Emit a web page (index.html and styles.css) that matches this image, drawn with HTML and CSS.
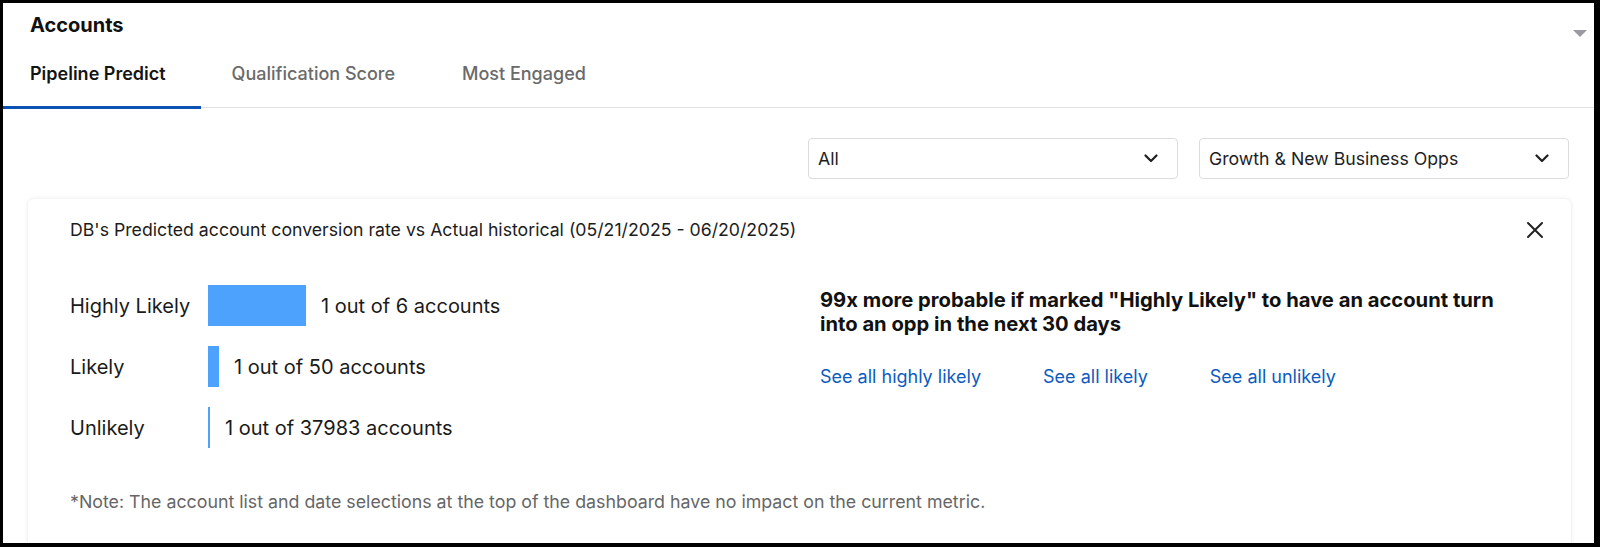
FILE: index.html
```html
<!DOCTYPE html>
<html lang="en">
<head>
<meta charset="utf-8">
<title>Accounts</title>
<link rel="stylesheet" href="styles.css">
</head>
<body>
<div class="frame">
  <header class="panel-head">
    <div class="title-row">
      <h1 class="title">Accounts</h1>
      <span class="collapse-caret"></span>
    </div>
    <nav class="tabs">
      <a class="tab active">Pipeline Predict</a>
      <a class="tab">Qualification Score</a>
      <a class="tab">Most Engaged</a>
    </nav>
  </header>

  <section class="content">
    <div class="filters">
      <div class="select">
        <span>All</span>
        <svg class="chev" width="14" height="9" viewBox="0 0 14 9"><path d="M1.5 1.5 L7 7 L12.5 1.5" fill="none" stroke="#1f1f1f" stroke-width="2.2" stroke-linecap="round" stroke-linejoin="round"/></svg>
      </div>
      <div class="select">
        <span>Growth &amp; New Business Opps</span>
        <svg class="chev" width="14" height="9" viewBox="0 0 14 9"><path d="M1.5 1.5 L7 7 L12.5 1.5" fill="none" stroke="#1f1f1f" stroke-width="2.2" stroke-linecap="round" stroke-linejoin="round"/></svg>
      </div>
    </div>

    <div class="card">
      <div class="card-head">
        <h2 class="card-title">DB's Predicted account conversion rate vs Actual historical (05/21/2025 - 06/20/2025)</h2>
        <svg class="close" width="18" height="18" viewBox="0 0 18 18"><path d="M2 2 L16 16 M16 2 L2 16" stroke="#222" stroke-width="2" stroke-linecap="round"/></svg>
      </div>
      <div class="card-body">
        <div class="rates">
          <div class="rate-row">
            <span class="rate-label">Highly Likely</span>
            <span class="bar" style="width:98px"></span>
            <span class="rate-text">1 out of 6 accounts</span>
          </div>
          <div class="rate-row">
            <span class="rate-label">Likely</span>
            <span class="bar" style="width:11px"></span>
            <span class="rate-text">1 out of 50 accounts</span>
          </div>
          <div class="rate-row">
            <span class="rate-label">Unlikely</span>
            <span class="bar" style="width:2px"></span>
            <span class="rate-text">1 out of 37983 accounts</span>
          </div>
        </div>
        <div class="insight">
          <p class="headline">99x more probable if marked "Highly Likely" to have an account turn into an opp in the next 30 days</p>
          <div class="links">
            <a class="link">See all highly likely</a>
            <a class="link">See all likely</a>
            <a class="link">See all unlikely</a>
          </div>
        </div>
      </div>
      <p class="note">*Note: The account list and date selections at the top of the dashboard have no impact on the current metric.</p>
    </div>
  </section>
</div>
</body>
</html>
```

FILE: styles.css
```css
* { box-sizing: border-box; }
html, body { margin: 0; padding: 0; background: #000; }
body {
  width: 1600px;
  height: 547px;
  overflow: hidden;
  font-family: Inter, "Liberation Sans", sans-serif;
  color: #1a1a1a;
}
.frame {
  height: 547px;
  border-style: solid;
  border-color: #000;
  border-width: 3px 6px 4px 3px;
  background: #fff;
  overflow: hidden;
}
.panel-head { position: relative; }
.title-row {
  display: flex;
  align-items: center;
  justify-content: space-between;
  padding: 10px 7px 0 27px;
}
.title {
  margin: 0;
  font-size: 20px;
  line-height: 24px;
  font-weight: 700;
  color: #111;
}
.collapse-caret {
  width: 0; height: 0;
  border-left: 7px solid transparent;
  border-right: 7px solid transparent;
  border-top: 7px solid #9a9aa2;
  margin-top: 17px;
}
.tabs {
  display: flex;
  margin-top: 14px;
  border-bottom: 1px solid #e2e2e2;
}
.tab {
  display: block;
  padding: 12px 36px 21px 31px;
  font-size: 18px;
  line-height: 22px;
  font-weight: 500;
  color: #6a6a6a;
  border-bottom: 3px solid transparent;
  margin-bottom: -2px;
}
.tab.active {
  padding-left: 27px;
  padding-right: 35px;
  color: #141414;
  font-weight: 600;
  border-bottom-color: #0b52b5;
}
.content { padding: 30px 25px 0 25px; }
.filters {
  display: flex;
  justify-content: flex-end;
  gap: 21px;
}
.select {
  width: 370px;
  height: 41px;
  border: 1px solid #dcdcdc;
  border-radius: 4px;
  display: flex;
  align-items: center;
  justify-content: space-between;
  padding: 0 19px 0 9px;
  font-size: 17.7px;
  color: #1e1e1e;
}
.chev { display: block; }
.card {
  margin-top: 20px;
  margin-right: -2px;
  border-radius: 6px;
  box-shadow: 0 0 4px rgba(0,0,0,0.10);
  padding: 19px 27px 40px 42px;
  background: #fff;
}
.card-head {
  display: flex;
  justify-content: space-between;
  align-items: center;
}
.card-title {
  margin: 0;
  font-size: 17.7px;
  line-height: 24px;
  font-weight: 400;
  color: #1c1c1c;
}
.close { display: block; }
.card-body {
  display: grid;
  grid-template-columns: 1fr 1fr;
  column-gap: 26px;
  margin-top: 43px;
}
.rates {
  display: flex;
  flex-direction: column;
  gap: 20px;
}
.rate-row {
  display: flex;
  align-items: center;
  height: 41px;
}
.rate-label {
  width: 138px;
  font-size: 20px;
  color: #1a1a1a;
}
.bar {
  display: block;
  height: 41px;
  background: #4ca2fd;
  margin-right: 15px;
}
.rate-text {
  font-size: 20px;
  color: #1a1a1a;
}
.insight { padding-top: 3px; }
.headline {
  margin: 0;
  max-width: 700px;
  font-size: 20.2px;
  line-height: 24px;
  font-weight: 700;
  color: #111;
}
.links {
  display: flex;
  gap: 62px;
  margin-top: 29px;
}
.link {
  font-size: 18px;
  line-height: 24px;
  color: #0d5bbf;
  cursor: pointer;
}
.note {
  margin: 42px 0 0 0;
  font-size: 17.8px;
  line-height: 24px;
  color: #666;
}
```
